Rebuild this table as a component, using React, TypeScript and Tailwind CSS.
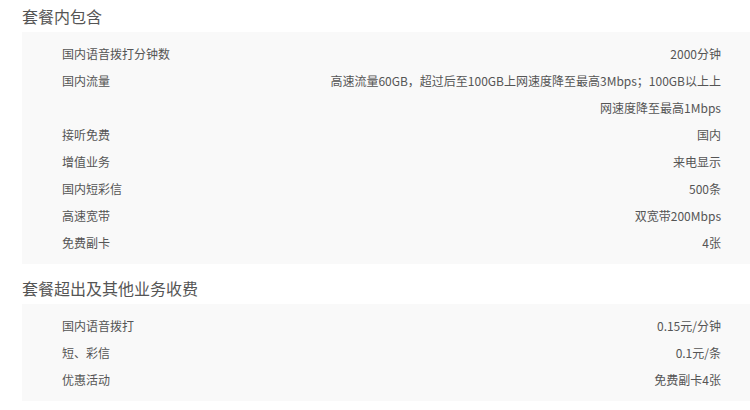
const included = [
  { label: "国内语音拨打分钟数", value: "2000分钟" },
  {
    label: "国内流量",
    value:
      "高速流量60GB，超过后至100GB上网速度降至最高3Mbps；100GB以上上网速度降至最高1Mbps",
  },
  { label: "接听免费", value: "国内" },
  { label: "增值业务", value: "来电显示" },
  { label: "国内短彩信", value: "500条" },
  { label: "高速宽带", value: "双宽带200Mbps" },
  { label: "免费副卡", value: "4张" },
];

const extra = [
  { label: "国内语音拨打", value: "0.15元/分钟" },
  { label: "短、彩信", value: "0.1元/条" },
  { label: "优惠活动", value: "免费副卡4张" },
];

function Section({
  title,
  rows,
}: {
  title: string;
  rows: { label: string; value: string }[];
}) {
  return (
    <div>
      <h2 className="h-8 text-base leading-8 text-[#555] pl-[22px]">{title}</h2>
      <div className="ml-[22px] bg-[#f9f9f9] py-2 pl-10 pr-[29px]">
        {rows.map((row) => (
          <div key={row.label} className="flex justify-between text-xs leading-[27px] text-[#555]">
            <span className="shrink-0">{row.label}</span>
            <span className="w-[400px] text-right">{row.value}</span>
          </div>
        ))}
      </div>
    </div>
  );
}

export default function App() {
  return (
    <div
      className="w-[750px] h-[410px] bg-white overflow-hidden"
      style={{ fontFamily: '"Noto Sans CJK SC", "Noto Sans", sans-serif' }}
    >
      <Section title="套餐内包含" rows={included} />
      <div className="mt-[8px]">
        <Section title="套餐超出及其他业务收费" rows={extra} />
      </div>
    </div>
  );
}
